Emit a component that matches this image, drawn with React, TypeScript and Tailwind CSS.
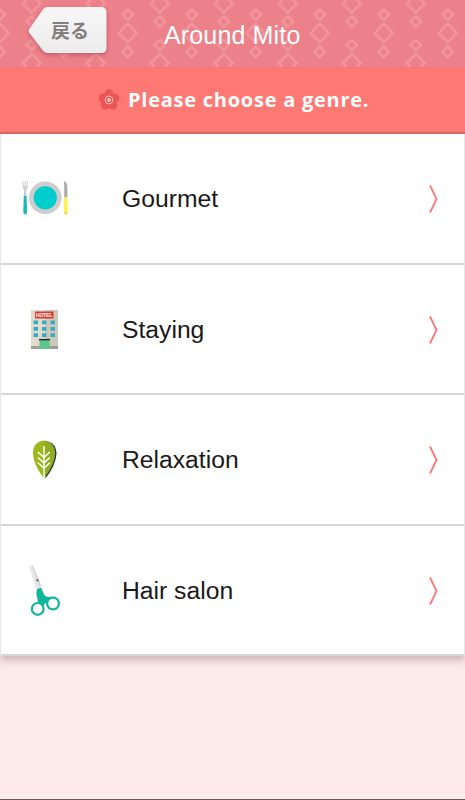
import type { ReactNode } from "react";

interface Genre {
  id: number;
  name: string;
  icon: ReactNode;
}

function PlateIcon() {
  return (
    <svg width="48" height="38" viewBox="0 0 48 38">
      <path d="M1.500 1v5.500q0 2.500 2.700 3.500q2.700-1 2.700-3.500V1H5.900v5H4.800V1H3.600v5H2.500V1z" fill="#cfcfcf" />
      <path d="M3.200 9h1.900l.4 8h-2.700z" fill="#c4cdcd" />
      <path d="M2.800 16h2.700l.5 16q0 2.500-1.800 2.500t-1.900-2.500z" fill="#19b8b8" />
      <circle cx="24.300" cy="17.800" r="16.300" fill="#cdcdcd" />
      <circle cx="24.300" cy="17.800" r="11.600" fill="#00cdcc" />
      <path d="M43.200 1q3.200 1 3.200 8v9h-3.200z" fill="#aaa" />
      <path d="M43.200 17h3l.5 16q0 1.600-1.900 1.600T43 33z" fill="#fff04a" />
      <circle cx="44.800" cy="33.300" r=".8" fill="#e99a50" />
    </svg>
  );
}

function HotelIcon() {
  return (
    <svg width="30" height="40" viewBox="0 0 30 40">
      <rect x="1" width="14" height="39" fill="#dfdccb" />
      <rect x="15" width="13" height="39" fill="#cbc8b7" />
      <rect x="1" y="36" width="27" height="3" fill="#a49e98" />
      <rect x="5" y="1.500" width="18.500" height="7" fill="#d93932" />
      <text x="14.300" y="7" textAnchor="middle" fill="#fff" fontSize="5.200" fontWeight="700" fontFamily="Liberation Sans, sans-serif" textLength="16.500">
        HOTEL
      </text>
      {[10.500, 17, 23.300].map((y) =>
        [3.500, 12, 20.500].map((x) => (
          <rect key={`${x}-${y}`} x={x} y={y} width="4.500" height="3.700" fill="#35a9cc" />
        ))
      )}
      <rect x="9.500" y="29.700" width="10" height="9.300" fill="#5bc78c" />
      <rect x="9" y="28.900" width="11" height="1.500" fill="#342923" />
    </svg>
  );
}

function LeafIcon() {
  return (
    <svg width="28" height="40" viewBox="0 0 28 40">
      <path d="M14 1q11 1 11.500 12.500Q25 25 14.500 38.500z" fill="#233846" />
      <path d="M13 .5q11 1.500 11.200 12.500Q24 24 13 38.500z" fill="#91ac20" />
      <path d="M13 .5Q2 2 2 13 2 24 13 38.500z" fill="#9eb71e" />
      <path d="M13 6v32M6.800 12l6.200 5.500 5.800-5.500M6.800 17.500L13 23l5.800-5.500M6.800 22.700L13 28.300l5.800-5.600" fill="none" stroke="#fff" strokeWidth="1.400" />
    </svg>
  );
}

function ScissorsIcon() {
  return (
    <svg width="34" height="52" viewBox="0 0 34 52">
      <path d="M1.500 1.500L5 .5l8.700 21-5.500 2.500z" fill="#d5d5d5" />
      <path d="M1.500 1.500L4 1l7.500 22-3.300 1z" fill="#e9e9e9" />
      <circle cx="9.400" cy="15.300" r="1.300" fill="#777" />
      <path d="M9 24l4.200-1.400q1.300 4 3.300 7.700q2 2.500 8.500 1.200v3l-8 4-4 7-5-5q2.500-3 1.500-6.500q-2-5.500-.5-10" fill="#12b69d" />
      <circle cx="9.700" cy="43.900" r="5.900" fill="#fff" stroke="#12b69d" strokeWidth="2.200" />
      <circle cx="25" cy="38.500" r="5.900" fill="#fff" stroke="#12b69d" strokeWidth="2.200" />
    </svg>
  );
}

function FlowerIcon() {
  return (
    <svg width="22" height="22" viewBox="0 0 22 22">
      {[0, 72, 144, 216, 288].map((angle) => (
        <circle key={angle} cx="11" cy="4.800" r="4.600" fill="#ea5653" transform={`rotate(${angle} 11 11)`} />
      ))}
      <circle cx="11" cy="11" r="5" fill="#ea5653" />
      <circle cx="11" cy="11" r="3.900" fill="none" stroke="#ffb9b3" strokeWidth="1" />
      <circle cx="11" cy="11" r="1.900" fill="#ffc9c3" />
    </svg>
  );
}

function DiamondPattern() {
  return (
    <svg className="absolute inset-0" width="465" height="67">
      <defs>
        <pattern id="diamonds" x="-0.300" y="3" width="64" height="60" patternUnits="userSpaceOnUse">
          <g fill="none" stroke="#f2959d" strokeWidth="2.300">
            <path d="M0 20.500l9 9.500-9 9.500-9-9.500zM64 20.500l9 9.500-9 9.500-9-9.500z" />
            <path d="M0 6.400l5.200 5.200L0 16.800l-5.200-5.200zM64 6.400l5.200 5.200-5.200 5.200-5.200-5.200z" />
            <path d="M0 43.700l5.200 5.200L0 54.100l-5.200-5.200zM64 43.700l5.200 5.200-5.200 5.200-5.200-5.200z" />
            <path d="M32-9.200l9 9.500-9 9.500-9-9.500zM32 50.800l9 9.500-9 9.500-9-9.500z" />
            <path d="M32 13.400l5.200 5.200-5.200 5.200-5.200-5.200zM32 36.800l5.200 5.200-5.200 5.200-5.200-5.200z" />
          </g>
        </pattern>
      </defs>
      <rect width="465" height="67" fill="url(#diamonds)" />
    </svg>
  );
}

const genres: Genre[] = [
  { id: 1, name: "Gourmet", icon: <PlateIcon /> },
  { id: 2, name: "Staying", icon: <HotelIcon /> },
  { id: 3, name: "Relaxation", icon: <LeafIcon /> },
  { id: 4, name: "Hair salon", icon: <ScissorsIcon /> },
];

export default function App() {
  return (
    <div className="flex h-[800px] w-[465px] flex-col overflow-hidden border-b border-[#655e5f] bg-[#fdeaea] font-['Liberation_Sans',Arial,sans-serif]">
      <header className="relative flex h-[67px] shrink-0 bg-[#ec818a]">
        <DiamondPattern />
        <button className="relative ml-[27px] mt-[6px] h-[50px] w-[81px]">
          <svg className="absolute inset-0 overflow-visible" width="81" height="50">
            <defs>
              <linearGradient id="back" x2="0" y2="1">
                <stop stopColor="#f7f7f7" />
                <stop offset="1" stopColor="#ececec" />
              </linearGradient>
            </defs>
            <path
              className="drop-shadow-[0_2px_2px_rgba(120,40,50,0.4)]"
              d="M20 1h54q5.500 0 5.500 5.500v35q0 5.500-5.500 5.500H20q-2.500 0-4.300-2.800L2 26.500q-1-1.500 0-3L15.700 3.800Q17.500 1 20 1z"
              fill="url(#back)"
            />
          </svg>
          <span className="absolute left-[24px] top-[12px] font-['Noto_Sans_CJK_JP',sans-serif] text-[19px] leading-6 font-bold text-[#858080]">
            戻る
          </span>
        </button>
        <h1 className="relative ml-[56px] mt-[20px] text-[25px] leading-[30px] tracking-[0.15px] whitespace-nowrap text-white">
          Around Mito
        </h1>
      </header>

      <div className="flex h-[67px] shrink-0 items-center gap-[8px] border-t border-b-2 border-t-[#f5777b] border-b-[#dd6a67] bg-[#ff7974] pl-[98px]">
        <FlowerIcon />
        <h2 className="font-['Open_Sans',sans-serif] text-[20px] leading-[30px] font-bold tracking-[0.75px] whitespace-nowrap text-white">
          Please choose a genre.
        </h2>
      </div>

      <ul className="shrink-0 border-x border-[#e6e6e6] bg-white shadow-[0_4px_8px_rgba(110,70,70,0.35)]">
        {genres.map((g) => (
          <li key={g.id} className="flex h-[130.500px] items-center border-b-2 border-[#d5d6d6]">
            <div className="mt-[2px] ml-px flex w-[86px] shrink-0 justify-center">{g.icon}</div>
            <span className="mt-[2px] ml-[34px] flex-1 text-[24.700px] leading-[30px] text-[#191919]">{g.name}</span>
            <svg className="mt-[2px] mr-[25px]" width="11" height="30" viewBox="0 0 11 30">
              <path d="M2 1.500l6.500 13.500L2 28.500" fill="none" stroke="#ff7772" strokeWidth="1.800" />
            </svg>
          </li>
        ))}
      </ul>
    </div>
  );
}
